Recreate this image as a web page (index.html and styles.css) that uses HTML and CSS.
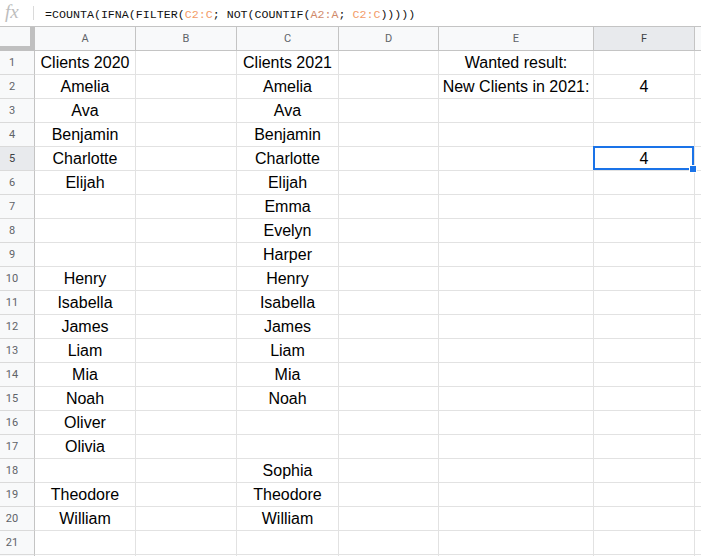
FILE: index.html
```html
<!DOCTYPE html>
<html>
<head>
<meta charset="utf-8">
<link rel="stylesheet" href="styles.css">
</head>
<body>
<div class="formula-bar">
  <span class="fx">fx</span>
  <span class="sep"></span>
  <span class="formula">=COUNTA(IFNA(FILTER(<span class="ref1">C2:C</span>; NOT(COUNTIF(<span class="ref2">A2:A</span>; <span class="ref1">C2:C</span>)))))</span>
</div>
<div class="sheet">
  <div class="corner"></div>
  <div class="ch">A</div><div class="ch">B</div><div class="ch">C</div><div class="ch">D</div><div class="ch">E</div><div class="ch ch-sel">F</div><div class="ch"></div>

  <div class="rh">1</div><div class="c">Clients 2020</div><div class="c"></div><div class="c">Clients 2021</div><div class="c"></div><div class="c">Wanted result:</div><div class="c"></div><div class="c"></div>
  <div class="rh">2</div><div class="c">Amelia</div><div class="c"></div><div class="c">Amelia</div><div class="c"></div><div class="c">New Clients in 2021:</div><div class="c">4</div><div class="c"></div>
  <div class="rh">3</div><div class="c">Ava</div><div class="c"></div><div class="c">Ava</div><div class="c"></div><div class="c"></div><div class="c"></div><div class="c"></div>
  <div class="rh">4</div><div class="c">Benjamin</div><div class="c"></div><div class="c">Benjamin</div><div class="c"></div><div class="c"></div><div class="c"></div><div class="c"></div>
  <div class="rh rh-sel">5</div><div class="c">Charlotte</div><div class="c"></div><div class="c">Charlotte</div><div class="c"></div><div class="c"></div><div class="c sel">4<span class="sel-box"><span class="handle"></span></span></div><div class="c"></div>
  <div class="rh">6</div><div class="c">Elijah</div><div class="c"></div><div class="c">Elijah</div><div class="c"></div><div class="c"></div><div class="c"></div><div class="c"></div>
  <div class="rh">7</div><div class="c"></div><div class="c"></div><div class="c">Emma</div><div class="c"></div><div class="c"></div><div class="c"></div><div class="c"></div>
  <div class="rh">8</div><div class="c"></div><div class="c"></div><div class="c">Evelyn</div><div class="c"></div><div class="c"></div><div class="c"></div><div class="c"></div>
  <div class="rh">9</div><div class="c"></div><div class="c"></div><div class="c">Harper</div><div class="c"></div><div class="c"></div><div class="c"></div><div class="c"></div>
  <div class="rh">10</div><div class="c">Henry</div><div class="c"></div><div class="c">Henry</div><div class="c"></div><div class="c"></div><div class="c"></div><div class="c"></div>
  <div class="rh">11</div><div class="c">Isabella</div><div class="c"></div><div class="c">Isabella</div><div class="c"></div><div class="c"></div><div class="c"></div><div class="c"></div>
  <div class="rh">12</div><div class="c">James</div><div class="c"></div><div class="c">James</div><div class="c"></div><div class="c"></div><div class="c"></div><div class="c"></div>
  <div class="rh">13</div><div class="c">Liam</div><div class="c"></div><div class="c">Liam</div><div class="c"></div><div class="c"></div><div class="c"></div><div class="c"></div>
  <div class="rh">14</div><div class="c">Mia</div><div class="c"></div><div class="c">Mia</div><div class="c"></div><div class="c"></div><div class="c"></div><div class="c"></div>
  <div class="rh">15</div><div class="c">Noah</div><div class="c"></div><div class="c">Noah</div><div class="c"></div><div class="c"></div><div class="c"></div><div class="c"></div>
  <div class="rh">16</div><div class="c">Oliver</div><div class="c"></div><div class="c"></div><div class="c"></div><div class="c"></div><div class="c"></div><div class="c"></div>
  <div class="rh">17</div><div class="c">Olivia</div><div class="c"></div><div class="c"></div><div class="c"></div><div class="c"></div><div class="c"></div><div class="c"></div>
  <div class="rh">18</div><div class="c"></div><div class="c"></div><div class="c">Sophia</div><div class="c"></div><div class="c"></div><div class="c"></div><div class="c"></div>
  <div class="rh">19</div><div class="c">Theodore</div><div class="c"></div><div class="c">Theodore</div><div class="c"></div><div class="c"></div><div class="c"></div><div class="c"></div>
  <div class="rh">20</div><div class="c">William</div><div class="c"></div><div class="c">William</div><div class="c"></div><div class="c"></div><div class="c"></div><div class="c"></div>
  <div class="rh">21</div><div class="c"></div><div class="c"></div><div class="c"></div><div class="c"></div><div class="c"></div><div class="c"></div><div class="c"></div>
  <div class="rh"></div><div class="c"></div><div class="c"></div><div class="c"></div><div class="c"></div><div class="c"></div><div class="c"></div><div class="c"></div>
</div>
</body>
</html>
```
FILE: styles.css
```css
html, body {
  margin: 0;
  padding: 0;
  background: #fff;
  overflow: hidden;
}
body {
  width: 701px;
  height: 556px;
}
.formula-bar {
  box-sizing: border-box;
  height: 27px;
  border-bottom: 1px solid #c4c4c4;
  display: flex;
  align-items: center;
  white-space: nowrap;
}
.fx {
  font-family: "Liberation Serif", serif;
  font-style: italic;
  font-size: 19px;
  color: #bdbdbd;
  width: 33px;
  padding-left: 5px;
  box-sizing: border-box;
  line-height: 26px;
  margin-top: -2px;
}
.sep {
  width: 1px;
  height: 14px;
  background: #dadada;
}
.formula {
  font-family: "Liberation Mono", "DejaVu Sans Mono", monospace;
  font-size: 11.65px;
  color: #111;
  padding-left: 11px;
  margin-top: 3px;
}
.ref1 { color: #f39b68; }
.ref2 { color: #d08a6a; }

.sheet {
  display: grid;
  grid-template-columns: 35px 101px 101px 102px 100px 155px 101px 40px;
  grid-auto-rows: 24px;
}
.corner {
  box-sizing: border-box;
  background: #f8f9fa;
  border-right: 5px solid #c0c0c0;
  border-bottom: 5px solid #c0c0c0;
}
.ch {
  box-sizing: border-box;
  background: #f8f9fa;
  border-right: 1px solid #c4c4c4;
  border-bottom: 1px solid #c4c4c4;
  font-family: Roboto, "Liberation Sans", sans-serif;
  font-size: 11px;
  color: #5f6368;
  text-align: center;
  line-height: 23px;
}
.ch-sel {
  background: #e8eaed;
  color: #3c4043;
}
.rh {
  box-sizing: border-box;
  background: #f8f9fa;
  border-right: 1px solid #c4c4c4;
  border-bottom: 1px solid #dadada;
  font-family: Roboto, "Liberation Sans", sans-serif;
  font-size: 11px;
  color: #5f6368;
  text-align: center;
  padding-right: 10px;
  line-height: 23px;
}
.rh-sel {
  background: #e8eaed;
  color: #3c4043;
}
.c {
  box-sizing: border-box;
  border-right: 1px solid #e2e2e2;
  border-bottom: 1px solid #e2e2e2;
  font-family: "Liberation Sans", Arial, sans-serif;
  font-size: 16px;
  color: #000;
  text-align: center;
  line-height: 23px;
  white-space: nowrap;
  overflow: visible;
}
.sel {
  position: relative;
}
.sel-box {
  position: absolute;
  left: -1px;
  top: -1px;
  right: 0;
  bottom: 0;
  border: 2px solid #1a73e8;
}
.handle {
  position: absolute;
  right: -5px;
  bottom: -5px;
  width: 6px;
  height: 6px;
  background: #1a73e8;
  border: 1px solid #fff;
}
```
